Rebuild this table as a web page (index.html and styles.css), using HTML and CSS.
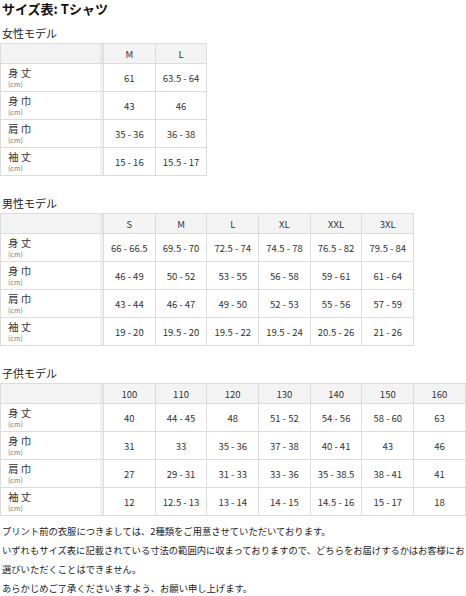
FILE: index.html
```html
<!DOCTYPE html>
<html lang="ja">
<head>
<meta charset="utf-8">
<link rel="stylesheet" href="styles.css">
</head>
<body>
<h1 class="title">サイズ表: Tシャツ</h1>

<h2 class="section">女性モデル</h2>
<table class="size">
  <colgroup><col class="c-label"><col class="c-data"><col class="c-data"></colgroup>
  <tr class="head"><th class="corner"></th><th>M</th><th>L</th></tr>
  <tr><th class="label"><span class="jp">身 丈</span><span class="unit">(cm)</span></th><td>61</td><td>63.5 - 64</td></tr>
  <tr><th class="label"><span class="jp">身 巾</span><span class="unit">(cm)</span></th><td>43</td><td>46</td></tr>
  <tr><th class="label"><span class="jp">肩 巾</span><span class="unit">(cm)</span></th><td>35 - 36</td><td>36 - 38</td></tr>
  <tr><th class="label"><span class="jp">袖 丈</span><span class="unit">(cm)</span></th><td>15 - 16</td><td>15.5 - 17</td></tr>
</table>

<h2 class="section">男性モデル</h2>
<table class="size">
  <colgroup><col class="c-label"><col class="c-data"><col class="c-data"><col class="c-data"><col class="c-data"><col class="c-data"><col class="c-data"></colgroup>
  <tr class="head"><th class="corner"></th><th>S</th><th>M</th><th>L</th><th>XL</th><th>XXL</th><th>3XL</th></tr>
  <tr><th class="label"><span class="jp">身 丈</span><span class="unit">(cm)</span></th><td>66 - 66.5</td><td>69.5 - 70</td><td>72.5 - 74</td><td>74.5 - 78</td><td>76.5 - 82</td><td>79.5 - 84</td></tr>
  <tr><th class="label"><span class="jp">身 巾</span><span class="unit">(cm)</span></th><td>46 - 49</td><td>50 - 52</td><td>53 - 55</td><td>56 - 58</td><td>59 - 61</td><td>61 - 64</td></tr>
  <tr><th class="label"><span class="jp">肩 巾</span><span class="unit">(cm)</span></th><td>43 - 44</td><td>46 - 47</td><td>49 - 50</td><td>52 - 53</td><td>55 - 56</td><td>57 - 59</td></tr>
  <tr><th class="label"><span class="jp">袖 丈</span><span class="unit">(cm)</span></th><td>19 - 20</td><td>19.5 - 20</td><td>19.5 - 22</td><td>19.5 - 24</td><td>20.5 - 26</td><td>21 - 26</td></tr>
</table>

<h2 class="section">子供モデル</h2>
<table class="size">
  <colgroup><col class="c-label"><col class="c-data"><col class="c-data"><col class="c-data"><col class="c-data"><col class="c-data"><col class="c-data"><col class="c-data"></colgroup>
  <tr class="head"><th class="corner"></th><th>100</th><th>110</th><th>120</th><th>130</th><th>140</th><th>150</th><th>160</th></tr>
  <tr><th class="label"><span class="jp">身 丈</span><span class="unit">(cm)</span></th><td>40</td><td>44 - 45</td><td>48</td><td>51 - 52</td><td>54 - 56</td><td>58 - 60</td><td>63</td></tr>
  <tr><th class="label"><span class="jp">身 巾</span><span class="unit">(cm)</span></th><td>31</td><td>33</td><td>35 - 36</td><td>37 - 38</td><td>40 - 41</td><td>43</td><td>46</td></tr>
  <tr><th class="label"><span class="jp">肩 巾</span><span class="unit">(cm)</span></th><td>27</td><td>29 - 31</td><td>31 - 33</td><td>33 - 36</td><td>35 - 38.5</td><td>38 - 41</td><td>41</td></tr>
  <tr><th class="label"><span class="jp">袖 丈</span><span class="unit">(cm)</span></th><td>12</td><td>12.5 - 13</td><td>13 - 14</td><td>14 - 15</td><td>14.5 - 16</td><td>15 - 17</td><td>18</td></tr>
</table>

<div class="notes">
  <p>プリント前の衣服につきましては、2種類をご用意させていただいております。</p>
  <p>いずれもサイズ表に記載されている寸法の範囲内に収まっておりますので、どちらをお届けするかはお客様にお選びいただくことはできません。</p>
  <p>あらかじめご了承くださいますよう、お願い申し上げます。</p>
</div>
</body>
</html>
```
FILE: styles.css
```css
html, body {
  margin: 0;
  padding: 0;
  background: #fff;
}
body {
  font-family: "Noto Sans CJK JP", "Noto Sans", sans-serif;
  color: #222;
  width: 466px;
  overflow: hidden;
}
.title {
  margin: 0;
  padding: 1px 0 0 2px;
  font-size: 13px;
  line-height: 16px;
  font-weight: bold;
  color: #111;
}
.section {
  margin: 9px 0 3px 0;
  padding-left: 2px;
  font-size: 11px;
  line-height: 14px;
  font-weight: normal;
  color: #222;
}
.size + .section {
  margin-top: 20px;
}
.size {
  border-collapse: collapse;
  table-layout: fixed;
  border: 1px solid #dcdcdc;
  font-size: 9.5px;
  line-height: 12px;
  color: #333;
}
.c-label { width: 103px; }
.c-data { width: 51.7px; }
.size th, .size td {
  border: 1px solid #dcdcdc;
  padding: 0;
  text-align: center;
  font-weight: normal;
  white-space: nowrap;
}
.size .head th {
  height: 19px;
  background: #f3f3f3;
}
.size .head th.corner {
  box-shadow: inset -3px 0 0 #e8e8e8;
}
.size td, .size th.label {
  height: 27px;
}
.size th.label {
  text-align: left;
  padding-left: 7px;
  box-shadow: inset -3px 0 0 #f2f2f2;
  vertical-align: middle;
}
.jp {
  display: block;
  font-size: 10.5px;
  line-height: 12px;
  color: #333;
}
.unit {
  display: block;
  margin-top: 1px;
  font-size: 7px;
  line-height: 8px;
  color: #777;
}
.notes {
  margin-top: 6px;
  padding-left: 2px;
  font-size: 9.3px;
  line-height: 19px;
  color: #222;
}
.notes p {
  margin: 0;
}
```
